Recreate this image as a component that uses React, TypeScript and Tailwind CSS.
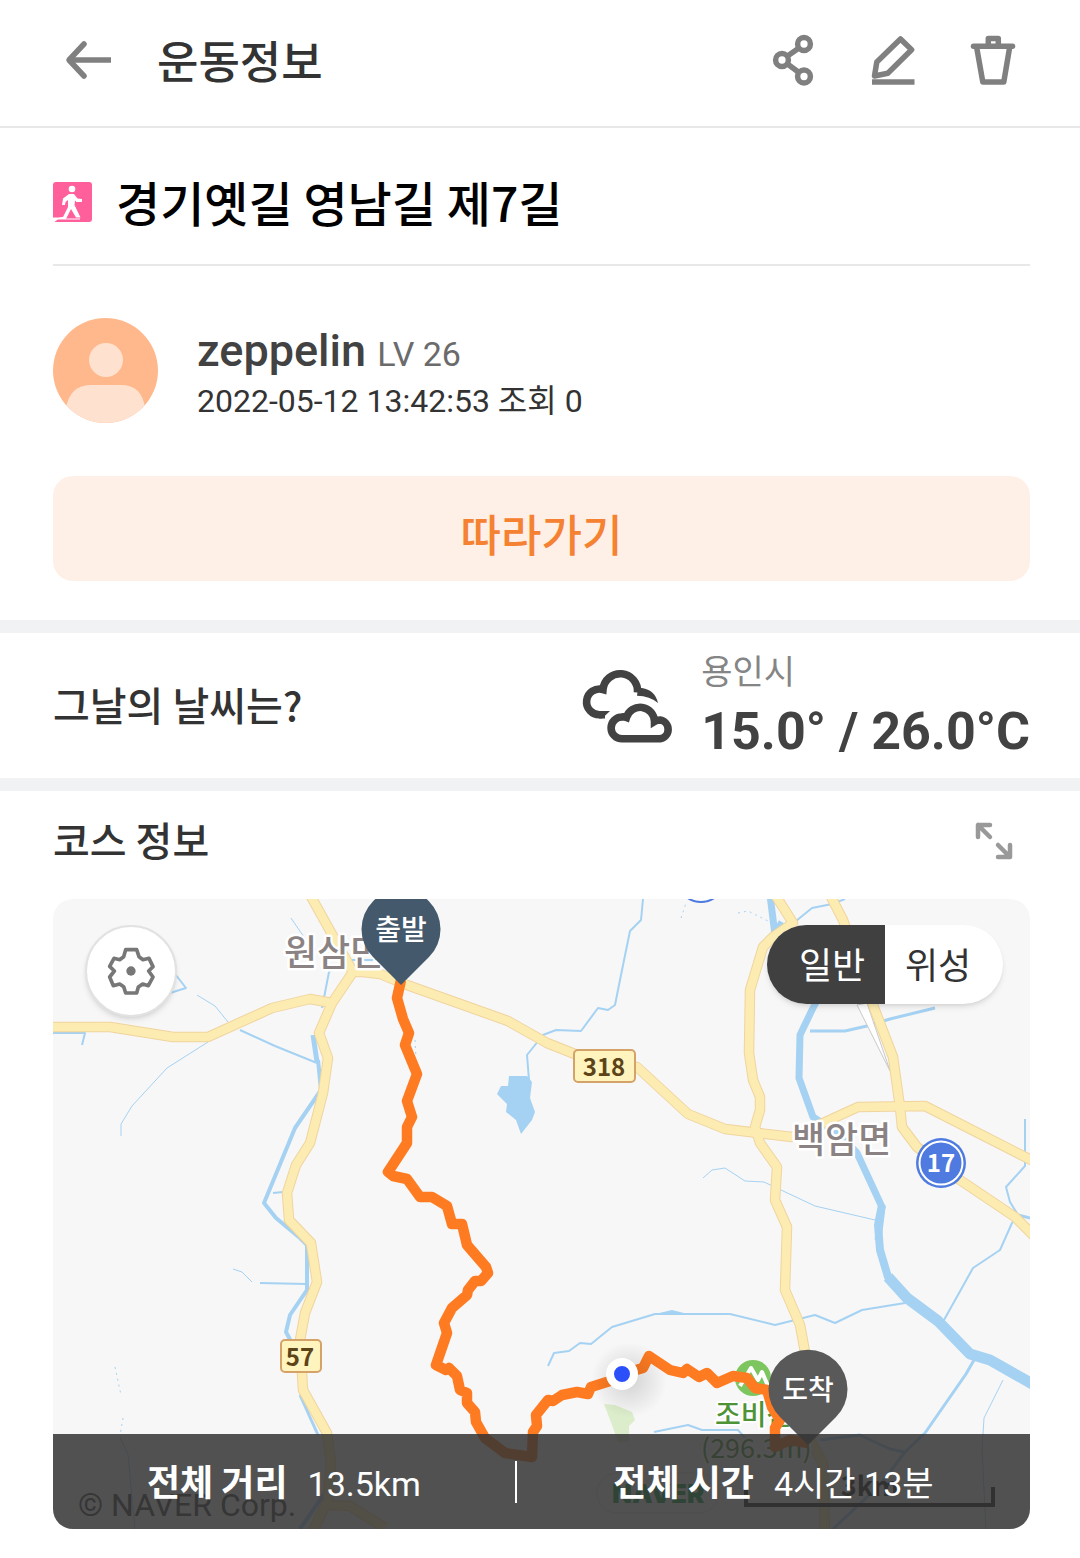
import type { ReactNode } from 'react'

const ROADS = [
  'M40 1027H110L173 1037H208L272 1008L310 999L332 1003',
  'M309 893L353 972L332 1003L319 1033L328 1058L323 1093L310 1143L296 1165L287 1193L289 1220L311 1243L317 1282L305 1313L300 1340L303 1390L327 1433L331 1463L328 1500L311 1535',
  'M327 1505L350 1506L385 1528',
  'M353 972H363L380 974L407 985L508 1021L547 1043L600 1064L637 1067L688 1114L725 1129L792 1137L823 1123L858 1107L925 1106L1035 1162',
  'M774 893L793 923L773 937L763 947L750 990L749 1053L753 1080L760 1097V1110L755 1127L760 1143L777 1167L775 1200L787 1227L785 1290L800 1325L805 1352L810 1440L823 1463L825 1535',
  'M829 893L843 920L873 1005L893 1057L900 1107L902 1127L917 1147L960 1180L1015 1217L1036 1238',
]

const RIVERS = [
  { d: 'M825 985L812 1010L800 1035L799 1078L813 1117L840 1135L857 1153L882 1207L878 1240', width: 7 },
  { d: 'M882 1205L878 1225L880 1250L888 1277L907 1298', width: 8 },
  { d: 'M888 1277L907 1298L938 1321L970 1354L990 1360L1036 1386', width: 11 },
  { d: 'M318 1060L321 1090L295 1128L264 1203L276 1218L300 1238L307 1245V1290L290 1315L286 1332L293 1345', width: 4 },
  { d: 'M313 1035L317 1062', width: 5 },
  { d: 'M208 1042L167 1068L132 1106L121 1124V1136', width: 1 },
  { d: 'M53 1033H85L82 1045', width: 2 },
  { d: 'M240 1030L275 1046L317 1063', width: 2 },
  { d: 'M197 995L215 1006L228 1022', width: 1 },
  { d: 'M172 970L186 988L170 993', width: 2 },
  { d: 'M291 918L306 940L318 952', width: 1 },
  { d: 'M375 960H345L329 972L322 1008', width: 2 },
  { d: 'M273 1193L283 1192', width: 2 },
  { d: 'M260 1283L306 1284', width: 2 },
  { d: 'M233 1269L242 1272L252 1282', width: 1 },
  { d: 'M300 1395L318 1435', width: 3 },
  { d: 'M120 1437L128 1455L135 1529', width: 1 },
  { d: 'M327 1490L300 1529', width: 4 },
  { d: 'M643 899L641 920L630 931L621 975L615 1005L608 1010L598 1008L581 1031L556 1030L543 1035L527 1055L529 1080', width: 2 },
  { d: 'M548 1366L554 1353L569 1351L580 1343L591 1344L612 1327L655 1314H730L775 1325L815 1315L835 1323L862 1310L905 1303', width: 2 },
  { d: 'M703 1178L712 1170L725 1168L745 1181L764 1182L815 1206L875 1220', width: 1 },
  { d: 'M654 1432L688 1425L702 1430L738 1430L745 1438', width: 2 },
  { d: 'M810 1031L845 1031L867 1026L890 1019L935 1008', width: 3 },
  { d: 'M796 921L812 908L832 904L845 899', width: 2 },
  { d: 'M770 895L775 935L782 922', width: 7 },
  { d: 'M1025 1119V1166L1006 1187L1010 1202L1018 1215L1012 1223L1000 1250L973 1268L944 1320', width: 2 },
  { d: 'M1018 1215L1030 1218', width: 3 },
  { d: 'M974 1360L966 1374L925 1433L905 1452L890 1449L860 1435L820 1440', width: 3 },
  { d: 'M1003 1380L984 1418L982 1450L986 1529', width: 1 },
  { d: 'M905 1452L880 1485L833 1529', width: 3 },
]

const ROUTE =
  'M401 980L397 998L403 1019L409 1033L405 1045L417 1074L407 1101L412 1117L407 1127V1143L388 1172L393 1176L407 1179L420 1197H432L447 1206L452 1224H462L467 1245L486 1267L488 1273L481 1281H475L468 1290L467 1295L452 1308L444 1323L447 1333L436 1365L446 1370L449 1368L457 1376L460 1390L467 1393L467 1403L475 1412L476 1422L485 1438L505 1453L532 1457L533 1432L537 1426L536 1415L548 1400L553 1401L562 1395L577 1392L588 1394L591 1387L610 1381L622 1374L643 1368L649 1356L670 1370L683 1373L687 1369L699 1377L707 1373L717 1383L733 1376L747 1378L755 1388L767 1390L772 1407L780 1420L775 1428V1447L790 1440L808 1443'

function IconButton({ label, className, children }: { label: string; className: string; children: ReactNode }) {
  return (
    <button type="button" aria-label={label} className="cursor-pointer">
      <svg className={className} viewBox="0 0 46 54" fill="none" stroke="#808080" strokeWidth="5.5" strokeLinejoin="round">
        {children}
      </svg>
    </button>
  )
}

function Header() {
  return (
    <header className="flex h-32 items-center border-b-2 border-[#e8e8e8] pr-16 pb-1.5 pl-[65px]">
      <IconButton label="뒤로" className="h-[54px] w-[46px]">
        <path d="M19 11L4 27L19 43" strokeLinecap="round" />
        <path d="M4 27H46" />
      </IconButton>
      <h1 className="ml-[46px] flex-1 pb-0.5 text-[45px] leading-none font-medium text-[#333]">운동정보</h1>
      <div className="flex gap-[54px]">
        <IconButton label="공유" className="h-[54px] w-[46px]">
          <circle cx="34" cy="11" r="6.4" />
          <circle cx="12" cy="27" r="6.4" />
          <circle cx="34" cy="43.5" r="6.4" />
          <path d="M17.5 23L29 15M17.5 31L29 39.5" />
        </IconButton>
        <IconButton label="수정" className="h-[54px] w-[46px]">
          <path d="M30.5 6L41.6 16.7L17.8 40.3L4.5 43L6.8 29Z" />
          <path d="M2 49H44.5" />
        </IconButton>
        <IconButton label="삭제" className="h-[54px] w-[46px]">
          <path d="M6.6 14L12.8 49H33.8L39.7 14M18.3 13V5.5H28.3V13" />
          <path d="M3.5 13.3H42.5" strokeLinecap="round" />
        </IconButton>
      </div>
    </header>
  )
}

function WalkIcon() {
  return (
    <svg className="h-10 w-[39px]" viewBox="0 0 39 40" aria-hidden="true">
      <rect width="39" height="40" rx="3" fill="#ff5f9b" />
      <circle cx="19" cy="7" r="3.3" fill="#fff" />
      <path d="M16 12H21L24.500 16.500L29 17V20H23.500L22 18.500L21.500 23L27.500 35.500H23L18 27L13.500 36H9.500L15 25V18L12.500 20L12 23H9L10 16.500Z" fill="#fff" />
      <path d="M0 35.500H5.500L13 34.500V36.500H27V37.500H5L1 40H0Z" fill="#fff" />
    </svg>
  )
}

function Avatar() {
  return (
    <svg className="size-[105px] rounded-full" viewBox="0 0 105 105" aria-hidden="true">
      <rect width="105" height="105" fill="#ffb88c" />
      <circle cx="53" cy="42" r="17" fill="#ffe1cf" />
      <path d="M13 105V90Q17 67 38 67H68Q89 67 92 90V105Z" fill="#ffe1cf" />
    </svg>
  )
}

function Weather() {
  return (
    <section className="flex h-[171px] items-center border-y-[13px] border-[#f1f2f4] pr-[50px] pl-[53px]">
      <h3 className="flex-1 pb-1 text-[40px] leading-none font-medium text-[#333]">그날의 날씨는?</h3>
      <svg className="mr-7 h-[78px] w-[92px] shrink-0" viewBox="0 -3 92 78" fill="none" stroke="#424242" strokeWidth="7.6" aria-hidden="true">
        <path d="M24 44.800H19A12.900 12.900 0 1 1 22 19.500A17.300 17.300 0 0 1 56.500 22.500" />
        <path d="M29 41L21 48.600H18V41Z" fill="#424242" stroke="none" />
        <path d="M57 18H61Q74 20 77 33Q69 26 56 25.700Z" fill="#424242" stroke="none" />
        <path d="M41 68.800H79A9.500 9.500 0 0 0 79 50Q76 50 73.500 51.500A14.300 14.300 0 0 0 45.500 47.500Q43 46.500 41 47A10.900 10.900 0 0 0 41 68.800Z" />
      </svg>
      <div className="pt-1">
        <p className="text-[34px] leading-[44px] text-[#858585]">용인시</p>
        <p className="pt-1 font-[Roboto,'Noto_Sans_CJK_KR',sans-serif] text-[52px] leading-[72px] font-bold whitespace-nowrap text-[#424242]">15.0° / 26.0°C</p>
      </div>
    </section>
  )
}

function Pin({ x, y, color, label }: { x: number; y: number; color: string; label: string }) {
  return (
    <g transform={`translate(${x} ${y})`}>
      <path d="M0 56L-28 28A39.500 39.500 0 1 1 28 28Z" fill={color} />
      <text y="11" textAnchor="middle" fontSize="28" fontWeight="500" fill="#fff">{label}</text>
    </g>
  )
}

function CourseMap() {
  return (
    <svg className="block h-full w-full" viewBox="53 899 977 630" preserveAspectRatio="xMidYMid slice" strokeLinejoin="round">
      <rect x="53" y="899" width="977" height="630" fill="#f7f7f7" />

      {/* Water and park */}
      <g fill="none" stroke="#a5d2f2">
        {RIVERS.map((river) => (
          <path key={river.d} d={river.d} strokeWidth={river.width} />
        ))}
        <path d="M738 913L748 911L768 921M681 918L686 903M115 1367L121 1395M123 1418L120 1435M415 1040L416 1058" strokeDasharray="2 4" />
      </g>
      <path d="M509 1076H527L532 1082L530 1098L535 1112L532 1120L521 1134L516 1120L506 1112L507 1104L497 1094L501 1086H508Z" fill="#a5d2f2" />
      <path d="M655 1314L672 1310L688 1314Z" fill="#a5d2f2" />
      <path d="M604 1404L615 1405L632 1412L635 1420L629 1426V1442H618L612 1425Z" fill="#dcedcb" />

      {/* Roads */}
      <path d="M857 1005L890 1071L867 1003Z" fill="#fff" stroke="#c8c8c8" />
      <g fill="none" stroke="#f0d49e" strokeWidth="10.500">
        {ROADS.map((d) => <path key={d} d={d} />)}
      </g>
      <g fill="none" stroke="#fcecb2" strokeWidth="8.500">
        {ROADS.map((d) => <path key={d} d={d} />)}
      </g>
      <g fill="#fff4bd" stroke="#d5a26a" strokeWidth="2">
        <rect x="574" y="1050" width="61" height="32" rx="4" />
        <rect x="281" y="1340" width="40" height="32" rx="4" />
      </g>
      <g fill="#5c4318" fontSize="24" fontWeight="700" textAnchor="middle">
        <text x="604" y="1076">318</text>
        <text x="300" y="1366">57</text>
      </g>
      <circle cx="941" cy="1163" r="25" fill="#4f7be0" />
      <circle cx="941" cy="1163" r="21.500" fill="none" stroke="#fff" strokeWidth="2" />
      <text x="941" y="1172" textAnchor="middle" fontSize="24" fontWeight="700" fill="#fff">17</text>
      <circle cx="701" cy="878" r="24" fill="#fff" stroke="#4f7be0" strokeWidth="2" />

      {/* Place names */}
      <g fontSize="36" fontWeight="500" fill="#8b8383" stroke="#fff" strokeWidth="5" paintOrder="stroke">
        <text x="284" y="966">원삼면</text>
        <text x="792" y="1153">백암면</text>
      </g>
      <circle cx="753" cy="1378" r="18" fill="#7dc55f" />
      <path d="M740 1386L751 1368L758 1380L762 1372L768 1386" fill="none" stroke="#fff" strokeWidth="4" />
      <g fontSize="28" fontWeight="500" fill="#4e9437" stroke="#fff" strokeWidth="4" paintOrder="stroke">
        <text x="715" y="1425">조비산</text>
        <text x="701" y="1458" fontSize="27" fontWeight="400">(296.3m)</text>
      </g>

      {/* Attribution and scale */}
      <text x="78" y="1516" fontSize="32" fontFamily="Roboto, sans-serif" fill="#444">© NAVER Corp.</text>
      <rect x="597" y="1473" width="122" height="40" rx="20" fill="#f7f7f7" stroke="#ddd" />
      <text x="612" y="1503" fontSize="26" fontFamily="Inter, sans-serif" fontWeight="900" fill="#16a34a">NAVER</text>
      <text x="870" y="1496" textAnchor="middle" fontSize="27" fontWeight="700" fill="#222">3km</text>
      <path d="M746 1487V1505H993V1487" fill="none" stroke="#222" strokeWidth="4" strokeLinejoin="miter" />

      {/* Walked route */}
      <path d={ROUTE} fill="none" stroke="#ff7b22" strokeWidth="10.500" />
      <defs>
        <radialGradient id="spot">
          <stop offset="0.2" stopColor="#000" stopOpacity="0.12" />
          <stop offset="1" stopColor="#000" stopOpacity="0" />
        </radialGradient>
      </defs>
      <circle cx="629" cy="1380" r="38" fill="url(#spot)" />
      <circle cx="622" cy="1374" r="12" fill="#2b50fa" stroke="#fff" strokeWidth="8" />
      <Pin x={401} y={929} color="#44596b" label="출발" />
      <Pin x={808} y={1389} color="#595959" label="도착" />
    </svg>
  )
}

function Stat({ label, value }: { label: string; value: string }) {
  return (
    <div className="flex items-baseline justify-center gap-5 whitespace-nowrap">
      <dt className="text-[36px] font-bold">{label}</dt>
      <dd className="font-[Roboto,'Noto_Sans_CJK_KR',sans-serif] text-[34px]">{value}</dd>
    </div>
  )
}

function Course() {
  return (
    <section className="pr-[50px] pb-[29px] pl-[53px]">
      <div className="flex h-[108px] items-center justify-between pr-4 pb-2">
        <h3 className="pb-1 text-[40px] leading-none font-medium text-[#333]">코스 정보</h3>
        <button type="button" aria-label="지도 확대" className="cursor-pointer">
          <svg className="size-10" viewBox="0 0 40 40" fill="none" stroke="#999" strokeWidth="4.500" strokeLinecap="round" strokeLinejoin="round">
            <path d="M16 4H4V16M4 4L16 16M24 36H36V24M36 36L24 24" />
          </svg>
        </button>
      </div>

      <div className="relative h-[630px] overflow-hidden rounded-[20px]">
        <CourseMap />

        <button type="button" aria-label="지도 설정" className="absolute top-[26px] left-8 flex size-[92px] cursor-pointer items-center justify-center rounded-full border-2 border-[#e2e2e2] bg-white shadow-md">
          <svg className="size-12" viewBox="172 173 144 144" fill="none" stroke="#777" strokeWidth="11" strokeLinejoin="round">
            <path d="M228 181H261L268 202L280 211L298 207L310 232L297 245L310 263L296 289L279 284L266 293L261 311H228L222 292L210 284L191 289L180 263L194 245L180 231L193 207L210 211L222 202Z" />
            <circle cx="244" cy="245" r="14" fill="#777" stroke="none" />
          </svg>
        </button>

        <div className="absolute top-[26px] right-[27px] flex h-[79px] overflow-hidden rounded-full bg-white text-[36px] shadow-md">
          <button type="button" aria-pressed="true" className="w-[118px] cursor-pointer bg-[#404040] pb-1 pl-3 text-white">일반</button>
          <button type="button" aria-pressed="false" className="w-[118px] cursor-pointer pr-3 pb-1 text-[#333]">위성</button>
        </div>

        <dl className="absolute inset-x-0 bottom-0 grid h-[95px] grid-cols-[9fr_2px_10fr] items-center bg-[#343434]/85 text-white">
          <Stat label="전체 거리" value="13.5km" />
          <div className="h-[42px] bg-white" />
          <Stat label="전체 시간" value="4시간 13분" />
        </dl>
      </div>
    </section>
  )
}

export default function App() {
  return (
    <div className="min-h-screen bg-white font-['Noto_Sans_CJK_KR',sans-serif]">
      <Header />

      <main>
        <section className="pr-[50px] pb-[39px] pl-[53px]">
          <div className="flex h-[138px] items-center gap-6 border-b-2 border-[#e8e8e8] pt-3">
            <WalkIcon />
            <h2 className="pb-0.5 text-[48px] leading-none font-medium text-black">경기옛길 영남길 제7길</h2>
          </div>

          <div className="mt-[52px] flex items-center gap-[39px] font-[Roboto,'Noto_Sans_CJK_KR',sans-serif]">
            <Avatar />
            <div className="pt-2">
              <p className="text-[45px] leading-[50px] font-medium text-[#424242]">
                zeppelin <span className="text-[34px] font-normal text-[#6b6b6b]">LV 26</span>
              </p>
              <p className="text-[32px] leading-[44px] text-[#333]">2022-05-12 13:42:53 조회 0</p>
            </div>
          </div>

          <button type="button" className="mt-[53px] h-[105px] w-full cursor-pointer rounded-[20px] bg-[#fff0e7] pt-2 text-[44px] font-medium text-[#f58232]">따라가기</button>
        </section>

        <Weather />
        <Course />
      </main>
    </div>
  )
}
